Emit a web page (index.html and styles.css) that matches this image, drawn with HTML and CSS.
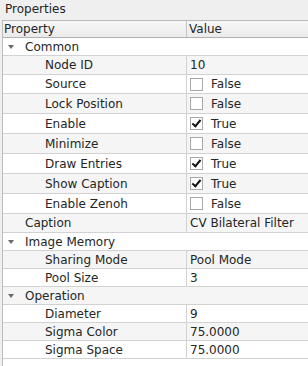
FILE: index.html
```html
<!DOCTYPE html>
<html>
<head>
  <meta charset="utf-8">
  <title>Properties</title>
  <link rel="stylesheet" href="styles.css">
</head>
<body>
  <div class="title">Properties</div>
  <div class="tree">
    <div class="row head">
      <div class="name">Property</div>
      <div class="value">Value</div>
    </div>
    <div class="row group"><span class="arrow"></span>Common</div>
    <div class="row alt r19">
      <div class="name sub">Node ID</div>
      <div class="value">10</div>
    </div>
    <div class="row r19">
      <div class="name sub">Source</div>
      <div class="value"><span class="box"></span>False</div>
    </div>
    <div class="row alt r20">
      <div class="name sub">Lock Position</div>
      <div class="value"><span class="box"></span>False</div>
    </div>
    <div class="row r20">
      <div class="name sub">Enable</div>
      <div class="value"><span class="box on"></span>True</div>
    </div>
    <div class="row alt r20">
      <div class="name sub">Minimize</div>
      <div class="value"><span class="box"></span>False</div>
    </div>
    <div class="row r20">
      <div class="name sub">Draw Entries</div>
      <div class="value"><span class="box on"></span>True</div>
    </div>
    <div class="row alt r20">
      <div class="name sub">Show Caption</div>
      <div class="value"><span class="box on"></span>True</div>
    </div>
    <div class="row r20">
      <div class="name sub">Enable Zenoh</div>
      <div class="value"><span class="box"></span>False</div>
    </div>
    <div class="row alt r19">
      <div class="name top">Caption</div>
      <div class="value">CV Bilateral Filter</div>
    </div>
    <div class="row group"><span class="arrow"></span>Image Memory</div>
    <div class="row alt">
      <div class="name sub">Sharing Mode</div>
      <div class="value">Pool Mode</div>
    </div>
    <div class="row">
      <div class="name sub">Pool Size</div>
      <div class="value">3</div>
    </div>
    <div class="row group alt"><span class="arrow"></span>Operation</div>
    <div class="row">
      <div class="name sub">Diameter</div>
      <div class="value">9</div>
    </div>
    <div class="row alt">
      <div class="name sub">Sigma Color</div>
      <div class="value">75.0000</div>
    </div>
    <div class="row">
      <div class="name sub">Sigma Space</div>
      <div class="value">75.0000</div>
    </div>
  </div>
</body>
</html>
```

FILE: styles.css
```css
html, body{
  margin: 0;
  height: 100%;
  background: #efefef;
}
body{
  display: flex;
  flex-direction: column;
  font-family: "DejaVu Sans", sans-serif;
  font-size: 12px;
  color: #232627;
  overflow: hidden;
}
.title{
  height: 20px;
  line-height: 19px;
  padding-left: 5px;
  flex: none;
}
.tree{
  flex: 1;
  margin-left: 2px;
  border-left: 1px solid #bdbdbd;
  background: #fff;
}
.row{
  display: flex;
  height: 18px;
  box-sizing: border-box;
  border-bottom: 1px solid #d2d2d2;
  align-items: center;
}
.r19{
  height: 19px;
}
.r20{
  height: 20px;
}
.alt{
  background: #f5f5f5;
}
.head{
  border-top: 1px solid #b8b8b8;
  border-bottom: 1px solid #b0b0b0;
  background: linear-gradient(#f7f7f7, #ebebeb);
}
.name{
  width: 183px;
  height: 100%;
  display: flex;
  align-items: center;
  border-right: 1px solid #d2d2d2;
  flex: none;
}
.head .name{
  padding-left: 1px;
  width: 182px;
  border-right-color: #c4c4c4;
}
.name.sub{
  padding-left: 42px;
  width: 141px;
}
.name.top{
  padding-left: 22px;
  width: 161px;
}
.value{
  display: flex;
  align-items: center;
  padding-left: 3px;
}
.head .value{
  padding-left: 2px;
}
.group{
  padding-left: 5px;
}
.arrow{
  width: 0;
  height: 0;
  border-left: 3.5px solid transparent;
  border-right: 3.5px solid transparent;
  border-top: 4px solid #6a6a6a;
  margin-right: 11px;
}
.box{
  position: relative;
  width: 11px;
  height: 11px;
  border: 1px solid #a8a8a8;
  background: #fff;
  margin-right: 8px;
}
.box.on::after{
  content: "";
  position: absolute;
  left: 3px;
  top: 0px;
  width: 3px;
  height: 7px;
  border-right: 2px solid #111;
  border-bottom: 2px solid #111;
  transform: rotate(40deg);
}
```
